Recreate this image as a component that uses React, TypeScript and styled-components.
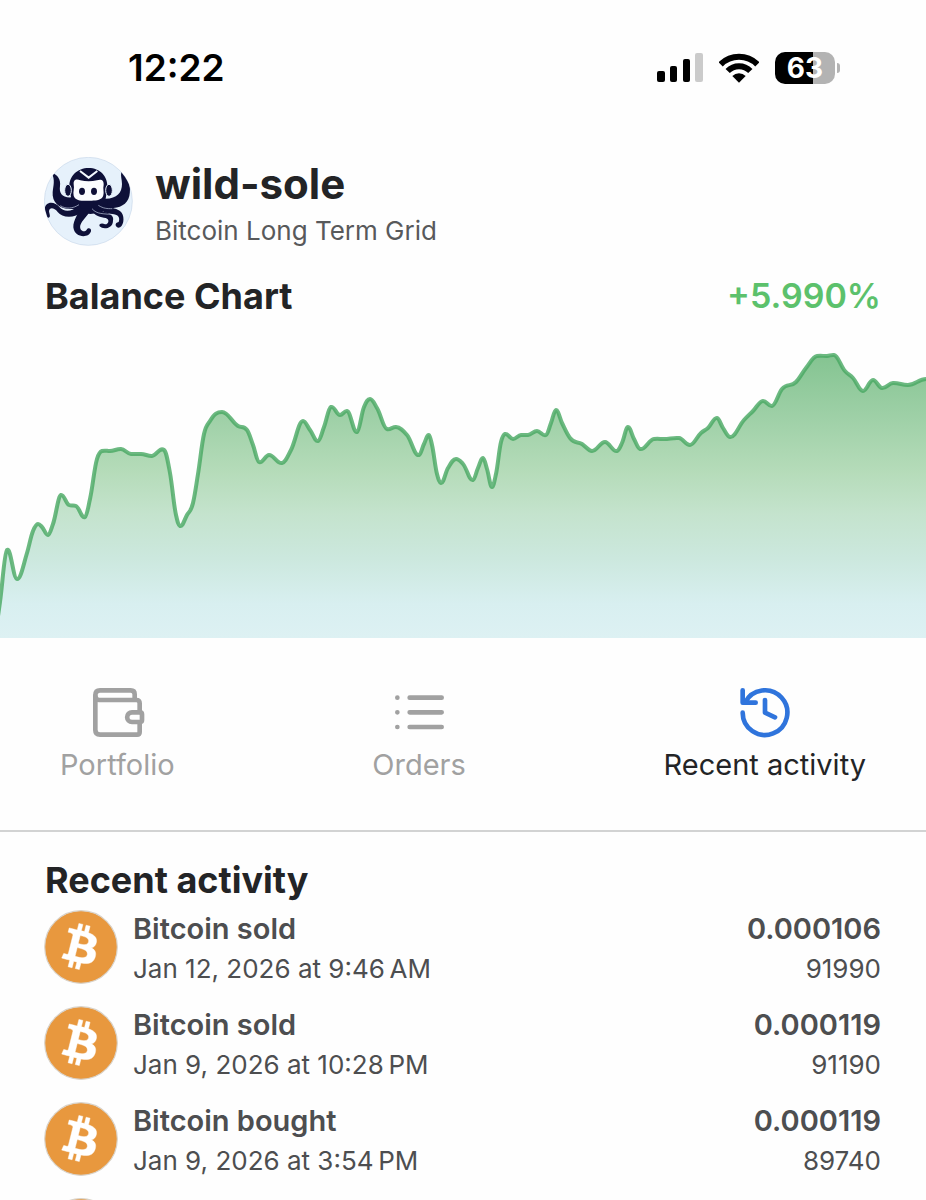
import React from "react";
import styled, { createGlobalStyle } from "styled-components";

const GlobalStyle = createGlobalStyle`
  * { box-sizing: border-box; }
  body {
    margin: 0;
    background: #fefefe;
    color: #232426;
    font-family: Inter, "Liberation Sans", sans-serif;
  }
  h1, h2, p, ul { margin: 0; padding: 0; }
`;

const Screen = styled.div`
  display: flex;
  flex-direction: column;
  height: 100vh;
  overflow: hidden;
`;

const StatusBar = styled.header`
  display: flex;
  flex: none;
  justify-content: space-between;
  align-items: center;
  height: 136px;
  padding: 0 86px 0 128px;
`;

const Clock = styled.time`
  color: #000;
  font-size: 37px;
  font-weight: 600;
  line-height: 40px;
`;

const Indicators = styled.div`
  display: flex;
  align-items: center;
  gap: 16px;
`;

const Battery = styled.div`
  display: flex;
  align-items: center;
  gap: 2px;
`;

const BatteryCell = styled.div<{ $level: number }>`
  display: flex;
  align-items: center;
  justify-content: center;
  width: 60px;
  height: 32px;
  border-radius: 10px;
  background: linear-gradient(to right, #000 ${(p) => p.$level}%, #b3b3b3 ${(p) => p.$level}%);
  color: #fff;
  font-size: 28px;
  font-weight: 700;
  line-height: 32px;
`;

const BatteryTip = styled.span`
  width: 3px;
  height: 10px;
  border-radius: 0 4px 4px 0;
  background: #b3b3b3;
`;

const Profile = styled.section`
  display: flex;
  flex: none;
  align-items: flex-start;
  gap: 22px;
  padding: 21px 44px 0;
`;

const ProfileText = styled.div`
  display: flex;
  flex-direction: column;
`;

const Name = styled.h1`
  font-size: 42px;
  font-weight: 700;
  line-height: 54px;
`;

const Strategy = styled.p`
  color: #58595b;
  font-size: 26px;
  line-height: 40px;
`;

const SectionHead = styled.div`
  display: flex;
  flex: none;
  justify-content: space-between;
  align-items: center;
  padding: 0 45px;
`;

const ChartHead = styled(SectionHead)`
  padding-top: 23px;
  padding-bottom: 2px;
`;

const SectionTitle = styled.h2`
  font-size: 36px;
  font-weight: 700;
  line-height: 44px;
`;

const Gain = styled.span`
  color: #5cc16c;
  font-size: 34px;
  font-weight: 600;
  line-height: 44px;
`;

const ChartSvg = styled.svg`
  display: block;
  flex: none;
  width: 100%;
  height: 318px;
`;

const Tabs = styled.nav`
  display: flex;
  flex: none;
  justify-content: space-between;
  padding: 47px 60px 45px;
  border-bottom: 2px solid #d2d3d3;
`;

const Tab = styled.button<{ $active?: boolean }>`
  display: flex;
  flex-direction: column;
  align-items: center;
  gap: 6px;
  padding: 0;
  border: 0;
  background: none;
  color: ${(p) => (p.$active ? "#232426" : "#a1a1a1")};
  font-family: inherit;
  font-size: 29px;
  line-height: 40px;

  svg {
    color: ${(p) => (p.$active ? "#2f74dc" : "#a1a1a1")};
  }
`;

const TabIcon = styled.svg`
  width: 54px;
  height: 54px;
  overflow: visible;
  fill: none;
  stroke: currentColor;
  stroke-width: 14;
  stroke-linecap: round;
  stroke-linejoin: round;
`;

const Activity = styled.section`
  flex: 1;
  min-height: 0;
  padding-top: 26px;
  overflow: hidden;
`;

const ActivityList = styled.ul`
  display: flex;
  flex-direction: column;
  gap: 22px;
  padding: 8px 45px 0 44px;
  list-style: none;
`;

const ActivityItem = styled.li`
  display: flex;
  align-items: center;
  gap: 15px;
  height: 74px;
`;

const ItemText = styled.div`
  flex: 1;
  padding-top: 4px;
`;

const ItemAmounts = styled.div`
  padding-top: 4px;
  text-align: right;
`;

const Primary = styled.p`
  color: #4d4e50;
  font-size: 29px;
  font-weight: 600;
  line-height: 40px;
`;

const Secondary = styled.p`
  color: #4d4e50;
  font-size: 26px;
  line-height: 40px;
`;

type Point = [number, number];

const CHART_WIDTH = 926;
const CHART_HEIGHT = 318;

const balance: Point[] = [
  [-2, 296], [0, 282], [7, 230], [17, 259], [27, 233], [33, 211], [38, 204], [42, 207], [48, 215], [53, 204],
  [61, 175], [69, 185], [76, 186], [85, 197], [90, 179], [97, 139], [102, 131], [110, 131], [121, 129],
  [131, 134], [141, 134], [152, 136], [164, 130], [170, 153], [176, 195], [180, 206], [187, 195],
  [193, 183], [198, 154], [204, 114], [210, 101], [222, 92], [238, 106], [247, 110], [253, 125],
  [259, 142], [269, 135], [282, 143], [291, 130], [303, 101], [310, 110], [318, 121], [324, 107],
  [331, 87], [340, 95], [347, 91], [357, 112], [364, 87], [370, 79], [377, 88], [387, 109],
  [396, 107], [407, 115], [419, 135], [424, 124], [429, 115], [432, 125], [437, 154], [441, 163],
  [448, 148], [456, 139], [463, 144], [473, 160], [478, 148], [483, 138], [487, 149], [492, 167],
  [496, 154], [501, 122], [505, 114], [513, 119], [521, 115], [528, 115], [537, 111], [546, 115],
  [551, 103], [556, 90], [562, 103], [570, 118], [582, 124], [592, 131], [605, 122], [617, 131],
  [622, 123], [628, 107], [634, 119], [640, 129], [654, 119], [664, 119], [679, 118], [690, 125],
  [701, 113], [708, 108], [717, 98], [723, 108], [730, 117], [744, 100], [753, 91], [763, 81],
  [772, 86], [782, 69], [796, 62], [806, 48], [817, 36], [827, 36], [834, 35], [845, 51],
  [853, 58], [863, 71], [873, 60], [882, 68], [893, 63], [908, 65], [926, 59], [930, 59],
];

// Cubic interpolation that flattens the tangent around local peaks and dips.
function smoothLine(points: Point[]): string {
  const n = points.length;
  const slopes = points.slice(1).map((p, i) => (p[1] - points[i][1]) / (p[0] - points[i][0]));
  const tangents = points.map((_, i) => {
    if (i === 0) return slopes[0];
    if (i === n - 1) return slopes[n - 2];
    const a = slopes[i - 1];
    const b = slopes[i];
    const h0 = points[i][0] - points[i - 1][0];
    const h1 = points[i + 1][0] - points[i][0];
    const mean = (a * h1 + b * h0) / (h0 + h1);
    if (a * b <= 0) return mean * 0.3;
    return Math.sign(a) * Math.min(Math.abs(a) * 3, Math.abs(b) * 3, Math.abs(mean));
  });
  let d = `M${points[0][0]} ${points[0][1]}`;
  for (let i = 1; i < n; i++) {
    const [x0, y0] = points[i - 1];
    const [x1, y1] = points[i];
    const h = (x1 - x0) / 2.6;
    d += `C${x0 + h} ${y0 + tangents[i - 1] * h} ${x1 - h} ${y1 - tangents[i] * h} ${x1} ${y1}`;
  }
  return d;
}

function BalanceChart() {
  const line = smoothLine(balance);
  return (
    <ChartSvg
      viewBox={`0 0 ${CHART_WIDTH} ${CHART_HEIGHT}`}
      preserveAspectRatio="none"
      role="img"
      aria-label="Balance Chart"
    >
      <defs>
        <linearGradient id="fill" gradientUnits="userSpaceOnUse" x1="0" y1="35" x2="0" y2="318">
          <stop offset="0" stopColor="#84c491" />
          <stop offset="0.2" stopColor="#9ccfa5" />
          <stop offset="0.42" stopColor="#b6dcba" />
          <stop offset="0.56" stopColor="#c4e3cd" />
          <stop offset="0.72" stopColor="#cce8de" />
          <stop offset="0.88" stopColor="#d8eff0" />
          <stop offset="1" stopColor="#ddf1f3" />
        </linearGradient>
      </defs>
      <path d={`${line}V318H-2Z`} fill="url(#fill)" />
      <path
        d={line}
        fill="none"
        stroke="#47a861"
        strokeOpacity="0.8"
        strokeWidth="4"
        strokeLinejoin="round"
        vectorEffect="non-scaling-stroke"
      />
    </ChartSvg>
  );
}

function SignalIcon() {
  return (
    <svg width="46" height="30" viewBox="0 0 46 30" aria-hidden="true">
      <rect x="0" y="18" width="8" height="11" rx="2" />
      <rect x="13" y="13" width="7" height="16" rx="2" />
      <rect x="26" y="6" width="7" height="23" rx="2" />
      <rect x="38" y="0" width="8" height="29" rx="2" fill="#cbcbcb" />
    </svg>
  );
}

function WifiIcon() {
  return (
    <svg width="40" height="30" viewBox="237 37 120 90" aria-hidden="true">
      <g fill="none" stroke="#000" strokeWidth="18">
        <path d="M242 71A78 78 0 0 1 352 71" />
        <path d="M263 91A48 48 0 0 1 331 91" />
      </g>
      <path d="M297 126L277 106A28 28 0 0 1 317 106Z" />
    </svg>
  );
}

const AvatarSvg = styled.svg`
  flex: none;
  width: 89px;
  height: 89px;
`;

function OctopusAvatar() {
  return (
    <AvatarSvg viewBox="43 35 267 267" role="img" aria-label="wild-sole">
      <clipPath id="disc">
        <circle cx="176" cy="168" r="132" />
      </clipPath>
      <circle cx="176" cy="168" r="132" fill="#e6f1fb" stroke="#c9d8ea" strokeWidth="2" />
      <g clipPath="url(#disc)" fill="#0e1038">
        <path d="M66 82C84 88 94 102 91 122C88 144 97 158 126 156L150 172L134 190C94 196 66 174 69 140C71 120 77 104 66 82Z" />
        <path d="M275 80C298 92 305 126 299 152C292 182 262 192 226 188L200 172L228 160C262 160 277 142 277 116C277 102 272 92 275 80Z" />
        <path d="M119 130C116 92 144 68 177 68C210 68 236 92 233 130L228 160C240 175 232 196 212 202L182 206L146 200C124 192 120 176 125 160Z" />
        <path d="M150 178C126 202 102 200 90 186C74 166 45 168 45 194C46 206 50 216 57 217C64 215 59 206 58 198C60 184 74 188 84 200C98 218 132 220 160 200Z" />
        <path d="M148 190C148 206 130 222 131 246C134 278 178 280 184 258C186 248 175 246 171 253C164 264 148 256 152 240C156 224 176 212 184 190Z" />
        <path d="M184 192C194 214 214 216 228 218C242 222 236 238 226 237C216 232 206 236 210 243C220 254 250 250 250 226C254 212 240 204 226 200Z" />
        <path d="M210 190C226 206 246 204 258 208C270 212 270 222 267 230C254 232 256 245 266 247C282 246 286 216 276 202C264 188 244 190 230 180Z" />
      </g>
      <path
        d="M132 117C131 101 142 101 152 105C168 109 186 109 202 105C213 101 223 103 222 118C219 130 224 140 221 150C216 168 193 166 177 166C160 166 137 168 132 151C129 140 135 130 132 117Z"
        fill="#fbfdff"
      />
      <path d="M151 77L177 97L203 77" fill="none" stroke="#f4f9ff" strokeWidth="6" />
      <g fill="#0e1038" stroke="#e6f1fb" strokeWidth="3">
        <ellipse cx="115" cy="135" rx="10" ry="18" />
        <ellipse cx="238" cy="135" rx="10" ry="18" />
      </g>
      <ellipse cx="157" cy="138" rx="9" ry="11" fill="#0e1038" />
      <ellipse cx="193" cy="138" rx="9" ry="11" fill="#0e1038" />
      <g fill="none" stroke="#c4cfe4" strokeWidth="2">
        <path d="M92 181C108 192 130 190 148 178" />
        <path d="M187 190C202 208 222 204 246 208" />
        <path d="M206 180C222 190 232 190 248 190" />
      </g>
    </AvatarSvg>
  );
}

const CoinSvg = styled.svg`
  flex: none;
  width: 74px;
  height: 74px;
`;

function BitcoinIcon() {
  return (
    <CoinSvg viewBox="0 0 32 32" aria-hidden="true">
      <circle cx="16" cy="16" r="15.7" fill="#e8983e" stroke="#d9d3ca" strokeWidth="0.5" />
      <path
        transform="translate(-0.5 -0.2)"
        fill="#fff"
        stroke="#fff"
        strokeWidth="0.2"
        d="M23.189 14.02c.314-2.096-1.283-3.223-3.465-3.975l.708-2.84-1.728-.43-.69 2.765c-.454-.114-.92-.22-1.385-.326l.695-2.783L15.596 6l-.708 2.839c-.376-.086-.746-.17-1.104-.26l.002-.009-2.384-.595-.46 1.846s1.283.294 1.256.312c.7.175.826.638.805 1.006l-.806 3.235c.048.012.11.03.18.057l-.183-.045-1.13 4.532c-.086.212-.303.531-.793.41.018.025-1.256-.313-1.256-.313l-.858 1.978 2.25.561c.418.105.828.215 1.231.318l-.715 2.872 1.727.43.708-2.84c.472.127.93.245 1.378.357l-.706 2.828 1.728.43.715-2.866c2.948.558 5.164.333 6.097-2.333.752-2.146-.037-3.385-1.588-4.192 1.13-.26 1.98-1.003 2.207-2.538zm-3.95 5.538c-.533 2.147-4.148.986-5.32.695l.95-3.805c1.172.293 4.929.872 4.37 3.11zm.535-5.569c-.487 1.953-3.495.96-4.47.717l.86-3.45c.975.243 4.118.696 3.61 2.733z"
      />
    </CoinSvg>
  );
}

interface Trade {
  title: string;
  date: string;
  amount: string;
  price: string;
}

const trades: Trade[] = [
  { title: "Bitcoin sold", date: "Jan 12, 2026 at 9:46\u202fAM", amount: "0.000106", price: "91990" },
  { title: "Bitcoin sold", date: "Jan 9, 2026 at 10:28\u202fPM", amount: "0.000119", price: "91190" },
  { title: "Bitcoin bought", date: "Jan 9, 2026 at 3:54\u202fPM", amount: "0.000119", price: "89740" },
];

export default function App() {
  return (
    <>
      <GlobalStyle />
      <Screen>
        <StatusBar>
          <Clock>12:22</Clock>
          <Indicators>
            <SignalIcon />
            <WifiIcon />
            <Battery>
              <BatteryCell $level={63}>63</BatteryCell>
              <BatteryTip />
            </Battery>
          </Indicators>
        </StatusBar>

        <Profile>
          <OctopusAvatar />
          <ProfileText>
            <Name>wild-sole</Name>
            <Strategy>Bitcoin Long Term Grid</Strategy>
          </ProfileText>
        </Profile>

        <ChartHead>
          <SectionTitle>Balance Chart</SectionTitle>
          <Gain>+5.990%</Gain>
        </ChartHead>
        <BalanceChart />

        <Tabs>
          <Tab type="button">
            <TabIcon viewBox="147 45 162 162" aria-hidden="true">
              <path d="M281 88V73Q281 61 269 61H177Q163 61 163 76V180Q163 194 177 194H288Q296 194 296 186V158" />
              <path d="M163 78Q163 90 175 90H286Q296 90 296 100V126" />
              <path d="M273 127H297Q303 127 303 133V150Q303 156 297 156H273A14 14 0 0 1 273 127Z" />
            </TabIcon>
            Portfolio
          </Tab>
          <Tab type="button">
            <TabIcon viewBox="1058 45 162 162" aria-hidden="true">
              <path d="M1074 83h.1M1074 127h.1M1074 171h.1M1111 83H1207M1111 127H1207M1111 171H1207" />
            </TabIcon>
            Orders
          </Tab>
          <Tab type="button" $active>
            <TabIcon viewBox="297 45 162 162" aria-hidden="true">
              <path d="M311 128A67 67 0 1 0 318 98" />
              <path d="M311 61V98H350M378 90V128L408 142" />
            </TabIcon>
            Recent activity
          </Tab>
        </Tabs>

        <Activity>
          <SectionHead>
            <SectionTitle>Recent activity</SectionTitle>
          </SectionHead>
          <ActivityList>
            {trades.map((trade) => (
              <ActivityItem key={trade.date}>
                <BitcoinIcon />
                <ItemText>
                  <Primary>{trade.title}</Primary>
                  <Secondary>{trade.date}</Secondary>
                </ItemText>
                <ItemAmounts>
                  <Primary>{trade.amount}</Primary>
                  <Secondary>{trade.price}</Secondary>
                </ItemAmounts>
              </ActivityItem>
            ))}
            <ActivityItem>
              <BitcoinIcon />
            </ActivityItem>
          </ActivityList>
        </Activity>
      </Screen>
    </>
  );
}
